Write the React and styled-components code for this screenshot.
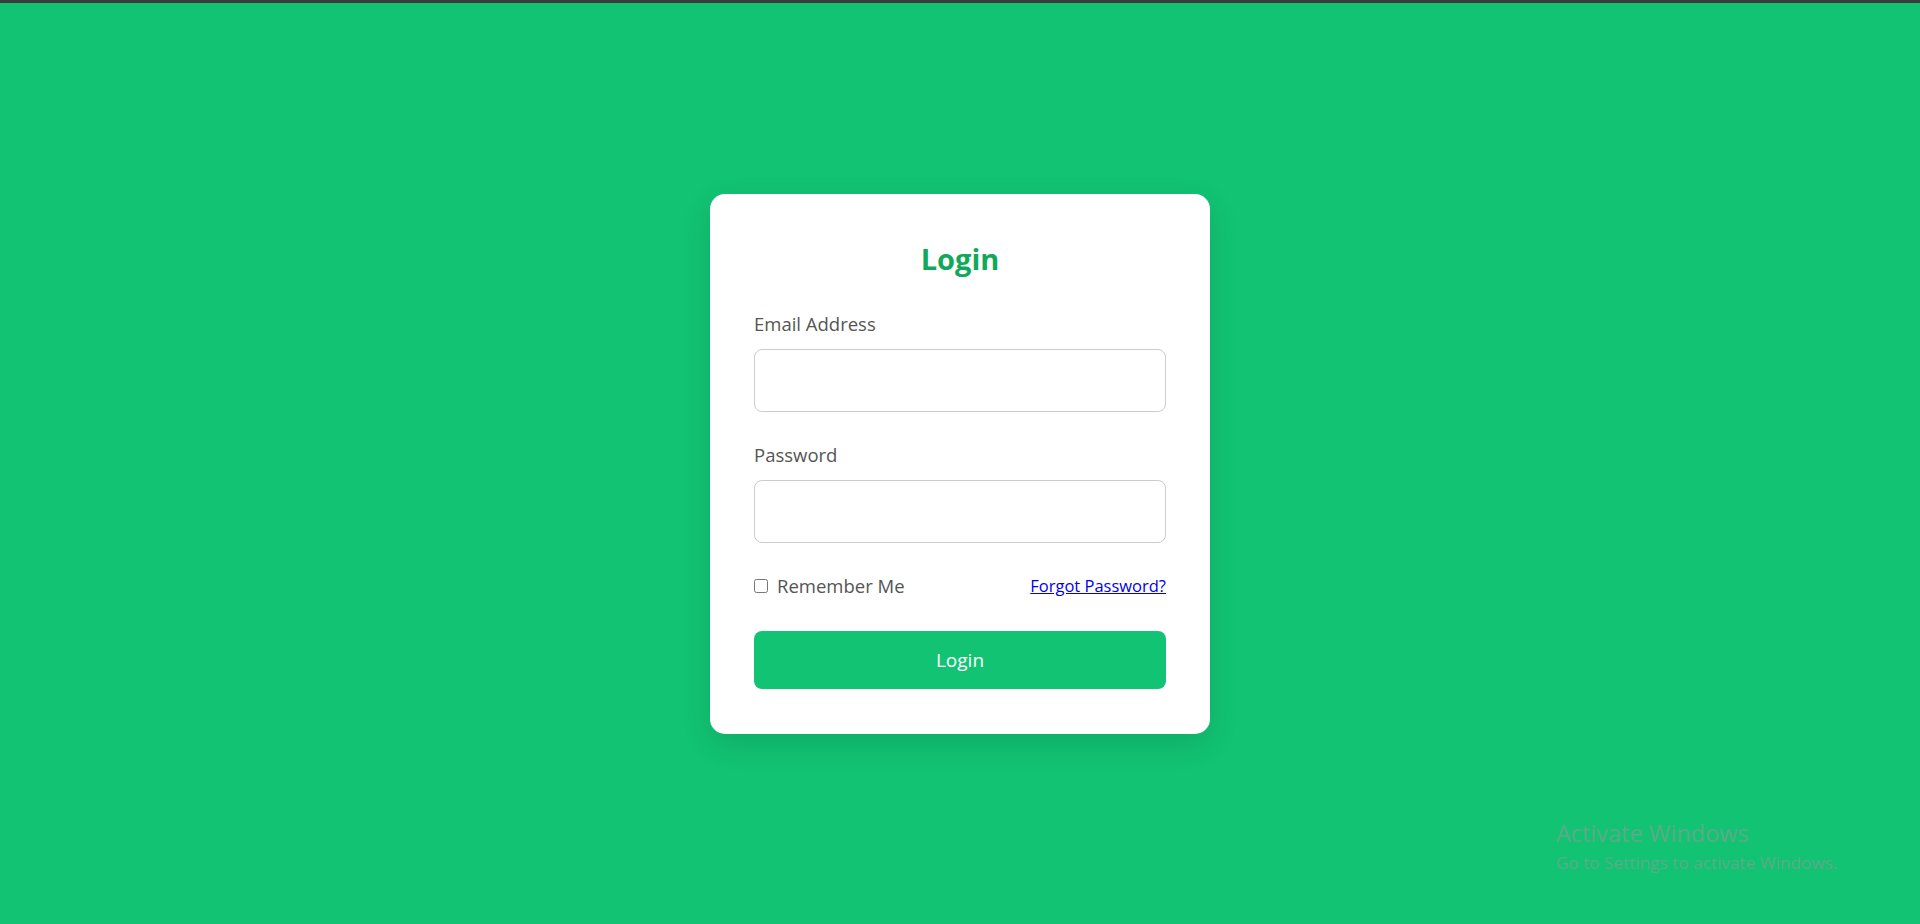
import React, { useState } from "react";
import styled, { createGlobalStyle } from "styled-components";

const GlobalStyle = createGlobalStyle`
  * {
    box-sizing: border-box;
  }
  html,
  body {
    margin: 0;
    padding: 0;
  }
  body {
    font-family: "Open Sans", "Noto Sans", "Liberation Sans", sans-serif;
    background-color: #12c373;
    border-top: 3px solid #3b3d3c;
  }
`;

const LoginPage = () => {
  const [email, setEmail] = useState("");
  const [password, setPassword] = useState("");
  const [remember, setRemember] = useState(false);

  const handleSubmit = (e) => {
    e.preventDefault();
  };

  return (
    <Page>
      <Card onSubmit={handleSubmit}>
        <Title>Login</Title>
        <Field>
          <Label htmlFor="email">Email Address</Label>
          <Input
            id="email"
            type="email"
            value={email}
            onChange={(e) => setEmail(e.target.value)}
          />
        </Field>
        <Field>
          <Label htmlFor="password">Password</Label>
          <Input
            id="password"
            type="password"
            value={password}
            onChange={(e) => setPassword(e.target.value)}
          />
        </Field>
        <OptionsRow>
          <Remember>
            <input
              type="checkbox"
              checked={remember}
              onChange={() => setRemember(!remember)}
            />
            Remember Me
          </Remember>
          <ForgotLink href="#">Forgot Password?</ForgotLink>
        </OptionsRow>
        <SubmitButton type="submit">Login</SubmitButton>
      </Card>
      <Watermark>
        <p className="big">Activate Windows</p>
        <p className="small">Go to Settings to activate Windows.</p>
      </Watermark>
    </Page>
  );
};

const Page = styled.div`
  min-height: calc(100vh - 3px);
  display: flex;
  align-items: center;
  justify-content: center;
`;

const Card = styled.form`
  width: 500px;
  padding: 44px 44px 45px;
  background-color: #fff;
  border-radius: 15px;
  box-shadow: 0 10px 30px rgba(0, 0, 0, 0.12);
  display: flex;
  flex-direction: column;
`;

const Title = styled.h2`
  margin: 0 0 31px;
  text-align: center;
  font-size: 29px;
  line-height: 42px;
  font-weight: 700;
  color: #10a85b;
`;

const Field = styled.div`
  display: flex;
  flex-direction: column;
  margin-bottom: 30px;
`;

const Label = styled.label`
  font-size: 18.5px;
  line-height: 26px;
  color: #555;
  margin-bottom: 12px;
`;

const Input = styled.input`
  height: 63px;
  width: 100%;
  padding: 0 16px;
  border: 1px solid #ccc;
  border-radius: 8px;
  font-size: 18px;
  font-family: inherit;
  outline: none;
  &:focus {
    border-color: #12c373;
  }
`;

const OptionsRow = styled.div`
  display: flex;
  align-items: center;
  justify-content: space-between;
  height: 26px;
  margin-bottom: 32px;
`;

const Remember = styled.label`
  display: flex;
  align-items: center;
  font-size: 18.5px;
  line-height: 26px;
  color: #555;
  cursor: pointer;
  input {
    width: 14px;
    height: 14px;
    margin: 0 9px 0 0;
  }
`;

const ForgotLink = styled.a`
  font-size: 16.5px;
  line-height: 26px;
  color: #0000ee;
  text-decoration: underline;
`;

const SubmitButton = styled.button`
  height: 58px;
  width: 100%;
  border: none;
  border-radius: 8px;
  background-color: #12c373;
  color: #fff;
  font-family: inherit;
  font-size: 19px;
  padding-top: 2px;
  cursor: pointer;
`;

const Watermark = styled.div`
  position: fixed;
  right: 82px;
  bottom: 48px;
  color: rgba(150, 150, 150, 0.6);
  pointer-events: none;
  p {
    margin: 0;
  }
  .big {
    font-size: 23.5px;
    line-height: 32px;
  }
  .small {
    font-size: 17.2px;
    line-height: 26px;
    margin-top: 1px;
  }
`;

const App = () => (
  <>
    <GlobalStyle />
    <LoginPage />
  </>
);

export default App;
